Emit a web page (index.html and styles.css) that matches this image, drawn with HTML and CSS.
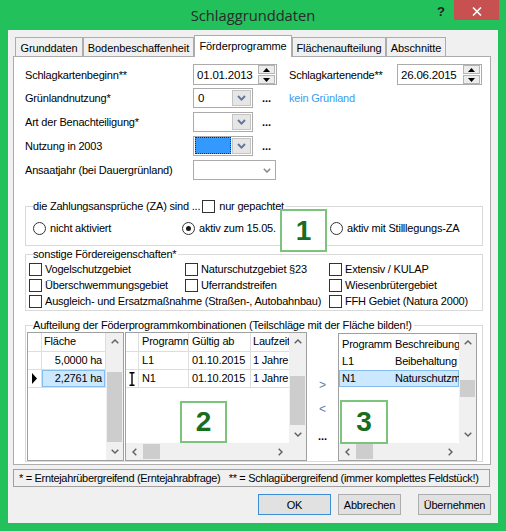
FILE: index.html
```html
<!DOCTYPE html>
<html lang="de">
<head>
<meta charset="utf-8">
<title>Schlaggrunddaten</title>
<link rel="stylesheet" href="styles.css">
</head>
<body>
<div class="window">
  <div class="titlebar">
    <div></div>
    <div class="title">Schlaggrunddaten</div>
    <div class="controls">
      <div class="help">?</div>
      <div class="close"><svg width="10" height="9" viewBox="0 0 10 9"><path d="M1 0.5 L9 8.5 M9 0.5 L1 8.5" stroke="#fff" stroke-width="1.6" fill="none"/></svg></div>
    </div>
  </div>
  <div class="client">
    <div class="tabs">
      <div class="tab t1">Grunddaten</div>
      <div class="tab t2">Bodenbeschaffenheit</div>
      <div class="tab t3 active">Förderprogramme</div>
      <div class="tab t4">Flächenaufteilung</div>
      <div class="tab t5">Abschnitte</div>
    </div>
    <div class="panel">
      <div class="form">
        <div class="lbl">Schlagkartenbeginn**</div>
        <div class="cell">
          <div class="date d1"><span>01.01.2013</span>
            <div class="spin">
              <div class="sb"><svg width="7" height="4" viewBox="0 0 7 4"><path d="M0 4 L3.5 0 L7 4Z" fill="#000"/></svg></div>
              <div class="sb"><svg width="7" height="4" viewBox="0 0 7 4"><path d="M0 0 L3.5 4 L7 0Z" fill="#000"/></svg></div>
            </div>
          </div>
        </div>
        <div class="lbl">Schlagkartenende**</div>
        <div class="cell">
          <div class="date d2"><span>26.06.2015</span>
            <div class="spin">
              <div class="sb"><svg width="7" height="4" viewBox="0 0 7 4"><path d="M0 4 L3.5 0 L7 4Z" fill="#000"/></svg></div>
              <div class="sb"><svg width="7" height="4" viewBox="0 0 7 4"><path d="M0 0 L3.5 4 L7 0Z" fill="#000"/></svg></div>
            </div>
          </div>
        </div>

        <div class="lbl">Grünlandnutzung*</div>
        <div class="cell">
          <div class="combo c60"><div class="cv">0</div><div class="cbtn"><svg width="9" height="6" viewBox="0 0 9 6"><path d="M1 1 L4.5 4.6 L8 1" fill="none" stroke="#5f7a98" stroke-width="2"/></svg></div></div>
          <span class="dots">...</span>
        </div>
        <div class="link">kein Grünland</div>

        <div class="lbl">Art der Benachteiligung*</div>
        <div class="cell">
          <div class="combo c60"><div class="cv"></div><div class="cbtn"><svg width="9" height="6" viewBox="0 0 9 6"><path d="M1 1 L4.5 4.6 L8 1" fill="none" stroke="#5f7a98" stroke-width="2"/></svg></div></div>
          <span class="dots">...</span>
        </div>
        <div class="empty2"></div>

        <div class="lbl">Nutzung in 2003</div>
        <div class="cell">
          <div class="combo c60"><div class="cv focus"></div><div class="cbtn"><svg width="9" height="6" viewBox="0 0 9 6"><path d="M1 1 L4.5 4.6 L8 1" fill="none" stroke="#5f7a98" stroke-width="2"/></svg></div></div>
          <span class="dots">...</span>
        </div>
        <div class="empty2"></div>

        <div class="lbl">Ansaatjahr (bei Dauergrünland)</div>
        <div class="cell">
          <div class="combo c83 flat"><div class="cv"></div><div class="carrow"><svg width="8" height="5" viewBox="0 0 8 5"><path d="M0.8 0.8 L4 4 L7.2 0.8" fill="none" stroke="#8a8a8a" stroke-width="1.6"/></svg></div></div>
        </div>
        <div class="empty2"></div>
      </div>

      <div class="group g1">
        <div class="legend">die Zahlungsansprüche (ZA) sind ...<span class="chk lchk"></span><span class="ltxt">nur gepachtet</span></div>
        <div class="radios">
          <div class="opt"><span class="radio"></span>nicht aktiviert</div>
          <div class="opt"><span class="radio on"></span>aktiv zum 15.05.</div>
          <div class="opt"><span class="radio"></span>aktiv mit Stilllegungs-ZA</div>
        </div>
      </div>

      <div class="group g2">
        <div class="legend">sonstige Fördereigenschaften*</div>
        <div class="checks">
          <div class="opt"><span class="chk"></span>Vogelschutzgebiet</div>
          <div class="opt"><span class="chk"></span>Naturschutzgebiet §23</div>
          <div class="opt"><span class="chk"></span>Extensiv / KULAP</div>
          <div class="opt"><span class="chk"></span>Überschwemmungsgebiet</div>
          <div class="opt"><span class="chk"></span>Uferrandstreifen</div>
          <div class="opt"><span class="chk"></span>Wiesenbrütergebiet</div>
          <div class="opt span2"><span class="chk"></span>Ausgleich- und Ersatzmaßnahme (Straßen-, Autobahnbau)</div>
          <div class="opt"><span class="chk"></span>FFH Gebiet (Natura 2000)</div>
        </div>
      </div>

      <div class="group g3">
        <div class="legend">Aufteilung der Föderprogrammkombinationen (Teilschläge mit der Fläche bilden!)</div>
        <div class="g3row">
          <div class="dg grid-a">
            <div class="tbl">
              <div class="tr h"><div class="ind ia"></div><div class="td fa">Fläche</div></div>
              <div class="tr"><div class="ind ia"></div><div class="td fa num">5,0000 ha</div></div>
              <div class="tr"><div class="ind ia"><svg width="5" height="11" viewBox="0 0 5 11"><path d="M0 0 L5 5.5 L0 11Z" fill="#000"/></svg></div><div class="td fa num sel">2,2761 ha</div></div>
            </div>
            <div class="vs vs-a">
              <div class="arr"><svg width="8" height="5" viewBox="0 0 8 5"><path d="M0.7 4.3 L4 1 L7.3 4.3" fill="none" stroke="#606060" stroke-width="1.4"/></svg></div>
              <div class="track"><div class="thumb"></div></div>
              <div class="arr"><svg width="8" height="5" viewBox="0 0 8 5"><path d="M0.7 0.7 L4 4 L7.3 0.7" fill="none" stroke="#606060" stroke-width="1.4"/></svg></div>
            </div>
          </div>

          <div class="dg grid-b">
            <div class="top">
              <div class="tbl">
                <div class="tr h"><div class="ind ib"></div><div class="td pb">Programm</div><div class="td gb">Gültig ab</div><div class="td lb">Laufzeit</div></div>
                <div class="tr"><div class="ind ib"></div><div class="td pb">L1</div><div class="td gb">01.10.2015</div><div class="td lb">1 Jahre</div></div>
                <div class="tr"><div class="ind ib"><svg width="6" height="14" viewBox="0 0 6 14"><path d="M0.5 0.7 H5.5 M3 0.7 V13.3 M0.5 13.3 H5.5" fill="none" stroke="#000" stroke-width="1.4"/></svg></div><div class="td pb">N1</div><div class="td gb">01.10.2015</div><div class="td lb">1 Jahre</div></div>
              </div>
              <div class="vs vs-b">
                <div class="arr"><svg width="8" height="5" viewBox="0 0 8 5"><path d="M0.7 4.3 L4 1 L7.3 4.3" fill="none" stroke="#606060" stroke-width="1.4"/></svg></div>
                <div class="track"><div class="thumb"></div></div>
                <div class="arr"><svg width="8" height="5" viewBox="0 0 8 5"><path d="M0.7 0.7 L4 4 L7.3 0.7" fill="none" stroke="#606060" stroke-width="1.4"/></svg></div>
              </div>
            </div>
            <div class="hrow">
              <div class="hs">
                <div class="harr"><svg width="5" height="8" viewBox="0 0 5 8"><path d="M4.3 0.7 L1 4 L4.3 7.3" fill="none" stroke="#606060" stroke-width="1.4"/></svg></div>
                <div class="hthumb"></div>
                <div class="htrack"></div>
                <div class="harr"><svg width="5" height="8" viewBox="0 0 5 8"><path d="M0.7 0.7 L4 4 L0.7 7.3" fill="none" stroke="#606060" stroke-width="1.4"/></svg></div>
              </div>
              <div class="corner"></div>
            </div>
          </div>

          <div class="mid">
            <div class="mbtn m1">&gt;</div>
            <div class="mbtn m2">&lt;</div>
            <div class="mbtn m3">...</div>
          </div>

          <div class="dg grid-c">
            <div class="top">
              <div class="list">
                <div class="lr"><span class="lc1">Programm</span><span class="lc2">Beschreibung</span></div>
                <div class="lr"><span class="lc1">L1</span><span class="lc2">Beibehaltung</span></div>
                <div class="lr lsel"><span class="lc1">N1</span><span class="lc2">Naturschutzmaßnahme</span></div>
              </div>
              <div class="vs vs-c">
                <div class="arr"><svg width="8" height="5" viewBox="0 0 8 5"><path d="M0.7 4.3 L4 1 L7.3 4.3" fill="none" stroke="#606060" stroke-width="1.4"/></svg></div>
                <div class="track"><div class="thumb"></div></div>
                <div class="arr"><svg width="8" height="5" viewBox="0 0 8 5"><path d="M0.7 0.7 L4 4 L7.3 0.7" fill="none" stroke="#606060" stroke-width="1.4"/></svg></div>
              </div>
            </div>
            <div class="hrow">
              <div class="hs">
                <div class="harr"><svg width="5" height="8" viewBox="0 0 5 8"><path d="M4.3 0.7 L1 4 L4.3 7.3" fill="none" stroke="#606060" stroke-width="1.4"/></svg></div>
                <div class="hthumb"></div>
                <div class="htrack"></div>
                <div class="harr"><svg width="5" height="8" viewBox="0 0 5 8"><path d="M0.7 0.7 L4 4 L0.7 7.3" fill="none" stroke="#606060" stroke-width="1.4"/></svg></div>
              </div>
              <div class="corner"></div>
            </div>
          </div>
        </div>
      </div>

      <div class="numbox nb1">1</div>
      <div class="numbox nb2">2</div>
      <div class="numbox nb3">3</div>
    </div>

    <div class="footer">* = Erntejahrübergreifend (Erntejahrabfrage)&nbsp;&nbsp; ** = Schlagübergreifend (immer komplettes Feldstück!)</div>

    <div class="buttons">
      <div class="btn ok">OK</div>
      <div class="btn cancel">Abbrechen</div>
      <div class="btn apply">Übernehmen</div>
    </div>
  </div>
</div>
</body>
</html>
```

FILE: styles.css
```css
* { box-sizing: border-box; margin: 0; padding: 0; }
html, body { width: 506px; height: 531px; overflow: hidden; }
body {
  background: #22c15b;
  font-family: "Liberation Sans", Arial, sans-serif;
  font-size: 11px;
  color: #000;
  letter-spacing: -0.2px;
}
.window {
  width: 506px;
  height: 531px;
  display: flex;
  flex-direction: column;
  padding: 0 8px 8px;
  background: #22c15b;
}
.titlebar {
  height: 30px;
  flex: none;
  display: grid;
  grid-template-columns: 1fr auto 1fr;
}
.title {
  font-family: "Open Sans", sans-serif;
  font-size: 14.7px;
  line-height: 30px;
  color: #2a2a2a;
  letter-spacing: 0;
}
.controls {
  justify-self: end;
  display: flex;
  height: 20px;
  margin-right: -1px;
}
.help {
  width: 26px;
  height: 20px;
  font-weight: bold;
  font-size: 13px;
  line-height: 23px;
  text-align: center;
  color: #222;
  letter-spacing: 0;
}
.close {
  width: 45px;
  height: 20px;
  background: #c75050;
  display: flex;
  align-items: center;
  justify-content: center;
  padding-top: 2px;
}
.client {
  flex: 1;
  background: #f0f0f0;
  display: flex;
  flex-direction: column;
  padding: 5px 7px 0 5px;
}
.tabs {
  height: 21px;
  flex: none;
  display: flex;
  align-items: flex-end;
  padding-left: 2px;
}
.tab {
  height: 19px;
  border: 1px solid #acacac;
  border-bottom: none;
  background: #f0f0f0;
  text-align: center;
  line-height: 18px;
  padding-top: 1px;
  white-space: nowrap;
  letter-spacing: -0.1px;
}
.t1 { width: 68px; }
.t2 { width: 111px; }
.t3 { width: 98px; }
.t4 { width: 94px; }
.t5 { width: 60px; }
.tab.active {
  height: 22px;
  background: #fff;
  margin-bottom: -1px;
  position: relative;
  z-index: 2;
  line-height: 20px;
  padding-top: 0;
}
.panel {
  height: 409px;
  flex: none;
  background: #fff;
  border: 1px solid #acacac;
  position: relative;
  padding: 6px 0 0 11px;
}

/* form */
.form {
  display: grid;
  grid-template-columns: 168px 96px 108px 85px;
  grid-template-rows: 23px 24px 24px 24px 24px;
  align-items: center;
}
.lbl { white-space: nowrap; }
.cell { display: flex; align-items: center; }
.link { grid-column: span 2; color: #3d9bef; }
.empty2 { grid-column: span 2; }
.date {
  height: 21px;
  border: 1px solid #ababab;
  background: #fff;
  display: flex;
  align-items: center;
  justify-content: space-between;
  padding: 0 1px 0 3px;
  font-size: 11.5px;
}
.d1 { width: 84px; }
.d2 { width: 85px; }
.spin { display: flex; flex-direction: column; gap: 1px; }
.sb {
  width: 17px;
  height: 9px;
  border: 1px solid #b4b4b4;
  background: #ececec;
  display: flex;
  align-items: center;
  justify-content: center;
}
.combo {
  height: 20px;
  border: 1px solid #ababab;
  background: #fff;
  display: flex;
  padding: 1px;
}
.c60 { width: 60px; }
.c83 { width: 83px; }
.cv { flex: 1; padding-left: 3px; line-height: 16px; font-size: 11.5px; }
.cv.focus {
  background: #3399ff;
  border: 1px dotted #2a2a2a;
  margin: -1px 1px 0 0;
  height: 17px;
}
.cbtn {
  width: 19px;
  height: 16px;
  border: 1px solid #c4c4c4;
  background: #e6e6e6;
  display: flex;
  align-items: center;
  justify-content: center;
}
.carrow {
  width: 14px;
  display: flex;
  align-items: center;
  justify-content: center;
}
.dots { font-weight: bold; margin-left: 9px; letter-spacing: 0; }

/* groups */
.group {
  width: 458px;
  border: 1px solid #d9d9d9;
  display: flex;
  flex-direction: column;
}
.g1 { margin-top: 24px; height: 40px; }
.g2 { margin-top: 8px; height: 57px; }
.g3 { margin-top: 14px; height: 137px; }
.legend {
  align-self: flex-start;
  margin: -8px 0 0 7px;
  height: 14px;
  line-height: 14px;
  background: #fff;
  padding-right: 2px;
  display: flex;
  align-items: center;
  white-space: nowrap;
}
.chk {
  width: 13px;
  height: 13px;
  border: 1px solid #333;
  background: #fff;
  flex: none;
}
.lchk { margin-left: 2px; }
.ltxt { margin-left: 4px; }
.radios {
  display: grid;
  grid-template-columns: 149px 148px 1fr;
  height: 16px;
  margin-top: 7px;
  padding-left: 7px;
  align-items: center;
}
.opt { display: flex; align-items: center; gap: 4px; white-space: nowrap; }
.radio {
  width: 13px;
  height: 13px;
  border: 1px solid #333;
  border-radius: 50%;
  background: #fff;
  flex: none;
  display: flex;
  align-items: center;
  justify-content: center;
}
.radio.on::after {
  content: "";
  width: 5px;
  height: 5px;
  border-radius: 50%;
  background: #1a1a1a;
}
.checks {
  display: grid;
  grid-template-columns: 156px 144px 1fr;
  grid-auto-rows: 16px;
  padding-left: 3px;
  align-items: center;
}
.checks .opt { gap: 3px; }
.span2 { grid-column: span 2; }

/* group 3 */
.g3row {
  display: flex;
  height: 129px;
  padding-left: 1px;
}
.dg {
  border: 1px solid #a0a0a0;
  background: #fff;
  display: flex;
  overflow: hidden;
  flex: none;
}
.grid-a { width: 97px; height: 129px; margin-right: 1px; }
.grid-b { width: 182px; height: 129px; flex-direction: column; }
.grid-c { width: 139px; height: 128px; margin-top: 1px; flex-direction: column; }
.top { display: flex; flex: none; }
.grid-b .top { height: 110px; }
.grid-c .top { height: 109px; }
.tbl { flex: 1; overflow: hidden; }
.tr {
  display: flex;
  height: 18px;
  border-bottom: 1px solid #dedede;
}
.tr.h { height: 19px; }
.ind {
  flex: none;
  border-right: 1px solid #dedede;
  display: flex;
  align-items: center;
  justify-content: center;
}
.ia { width: 14px; }
.ib { width: 13px; }
.td {
  flex: none;
  border-right: 1px solid #dedede;
  padding: 0 3px 0 2px;
  line-height: 17px;
  overflow: hidden;
  white-space: nowrap;
}
.fa { width: 64px; }
.pb { width: 50px; padding-left: 3px; }
.gb { width: 62px; padding-left: 3px; }
.lb { width: 38px; padding-left: 2px; border-right: none; }
.num { text-align: right; }
.sel {
  background: #cce8ff;
  box-shadow: inset 0 0 0 1px #84bdee;
}
.vs {
  width: 17px;
  flex: none;
  background: #f0f0f0;
  display: flex;
  flex-direction: column;
}
.arr {
  height: 17px;
  flex: none;
  display: flex;
  align-items: center;
  justify-content: center;
}
.track { flex: 1; }
.thumb { background: #cdcdcd; margin: 0 1px; }
.vs-a .thumb { margin-top: 22px; height: 70px; }
.vs-b .thumb { margin-top: 26px; height: 49px; }
.vs-c .thumb { margin-top: 29px; height: 17px; }
.hrow { display: flex; height: 17px; flex: none; }
.hs { flex: 1; display: flex; background: #f0f0f0; }
.harr {
  width: 17px;
  flex: none;
  display: flex;
  align-items: center;
  justify-content: center;
}
.hthumb { width: 17px; flex: none; background: #cdcdcd; margin: 1px 0; }
.htrack { flex: 1; }
.corner { width: 17px; flex: none; background: #f0f0f0; }

.mid {
  width: 31px;
  flex: none;
  display: flex;
  flex-direction: column;
  align-items: center;
}
.mbtn { line-height: 14px; font-size: 12px; color: #6280a6; letter-spacing: 0; }
.m1 { margin-top: 46px; }
.m2 { margin-top: 10px; }
.m3 { margin-top: 13px; color: #000; font-weight: bold; font-size: 11px; }

.list { flex: 1; overflow: hidden; padding-top: 2px; }
.lr {
  display: flex;
  height: 17px;
  line-height: 16px;
  white-space: nowrap;
}
.lc1 { width: 53px; flex: none; padding-left: 3px; }
.lc2 { flex: none; padding-left: 3px; }
.lsel {
  background: #cce8ff;
  box-shadow: inset 0 0 0 1px #84bdee;
}

/* number overlays */
.numbox {
  position: absolute;
  border: 2px solid #7cc47c;
  background: #fff;
  display: flex;
  align-items: center;
  justify-content: center;
  font-family: "Liberation Sans", Arial, sans-serif;
  font-weight: bold;
  font-size: 28px;
  color: #186d1e;
  letter-spacing: 0;
}
.nb1 { left: 266px; top: 152px; width: 47px; height: 43px; }
.nb2 { left: 166px; top: 344px; width: 47px; height: 42px; }
.nb3 { left: 326px; top: 343px; width: 48px; height: 44px; }

/* footer + buttons */
.footer {
  height: 18px;
  flex: none;
  margin-top: 4px;
  margin-right: 1px;
  border: 1px solid #a0a0a0;
  background: #f0f0f0;
  padding-left: 5px;
  line-height: 16px;
  white-space: nowrap;
  overflow: hidden;
  letter-spacing: -0.32px;
}
.buttons {
  display: flex;
  justify-content: flex-end;
  margin-top: 7px;
  flex: none;
}
.btn {
  height: 21px;
  border: 1px solid #adadad;
  background: #e1e1e1;
  display: flex;
  align-items: center;
  justify-content: center;
}
.ok { width: 73px; margin-right: 7px; border-color: #3c8dd6; }
.cancel { width: 63px; margin-right: 17px; }
.apply { width: 73px; }
```
